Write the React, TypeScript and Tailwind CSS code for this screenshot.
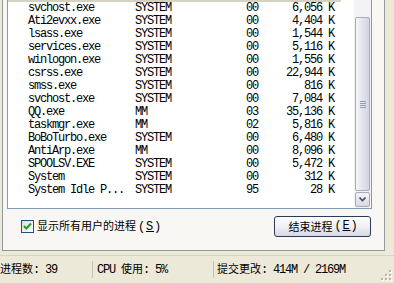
import React from 'react';

const ROWS: [string, string, string, string][] = [
  ['svchost.exe', 'SYSTEM', '00', '6,056 K'],
  ['Ati2evxx.exe', 'SYSTEM', '00', '4,404 K'],
  ['lsass.exe', 'SYSTEM', '00', '1,544 K'],
  ['services.exe', 'SYSTEM', '00', '5,116 K'],
  ['winlogon.exe', 'SYSTEM', '00', '1,556 K'],
  ['csrss.exe', 'SYSTEM', '00', '22,944 K'],
  ['smss.exe', 'SYSTEM', '00', '816 K'],
  ['svchost.exe', 'SYSTEM', '00', '7,084 K'],
  ['QQ.exe', 'MM', '03', '35,136 K'],
  ['taskmgr.exe', 'MM', '02', '5,816 K'],
  ['BoBoTurbo.exe', 'SYSTEM', '00', '6,480 K'],
  ['AntiArp.exe', 'MM', '00', '8,096 K'],
  ['SPOOLSV.EXE', 'SYSTEM', '00', '5,472 K'],
  ['System', 'SYSTEM', '00', '312 K'],
  ['System Idle P...', 'SYSTEM', '95', '28 K'],
];

// ascii in a narrow mono (6px cells), cjk in its own span
const mono = "font-['Liberation_Mono',monospace] text-[12px] tracking-[-1.2px]";
const cjk = "font-['Noto_Sans_CJK_SC',sans-serif] text-[11px] tracking-normal";

const Cjk: React.FC<{ children: React.ReactNode }> = ({ children }) => (
  <span className={cjk}>{children}</span>
);

// "(S)" style accelerator, a little wider than plain ascii
const Key: React.FC<{ k: string }> = ({ k }) => (
  <span className="tracking-[0.8px] ml-[2px]">
    (<span className="underline">{k}</span>)
  </span>
);

export default function App() {
  return (
    <div className={`w-[394px] h-[283px] overflow-hidden bg-[#ece9d8] flex flex-col text-black ${mono}`}>
      {/* tab page */}
      <div className="flex">
        <div className="w-[2px] bg-[#ece9d8]" />
        <div className="w-[383px] h-[251px] bg-[#f8f7f3] border-l border-r border-b border-[#919b9c] flex flex-col pl-[4px] pr-[12px]">
          {/* list view */}
          <div className="h-[209px] border-l border-r border-b border-[#7f9db9] bg-white flex">
            <div className="flex-1 flex flex-col">
              <div className="h-[2px] w-[333px] bg-[#d6d2c2]" />
              {ROWS.map((r, i) => (
                <div key={i} className="h-[13px] leading-[13px] grid grid-cols-[20px_107px_111px_40px_49px] whitespace-pre">
                  <span />
                  <span>{r[0]}</span>
                  <span>{r[1]}</span>
                  <span>{r[2]}</span>
                  <span className="text-right pr-[1px]">{r[3]}</span>
                </div>
              ))}
            </div>
            {/* scrollbar */}
            <div className="w-[17px] bg-[#f3f3f6] flex flex-col">
              <div className="h-[17px]" />
              <div className="flex-1 mx-[1px] rounded-[2px] border border-[#a8a9c0] bg-gradient-to-r from-[#f6f6fa] via-[#e3e3ec] to-[#d4d4e0] flex items-center justify-center">
                <div className="flex flex-col gap-[1px]">
                  <div className="w-[6px] h-[1px] bg-[#9a9ab0]" />
                  <div className="w-[6px] h-[1px] bg-[#9a9ab0]" />
                  <div className="w-[6px] h-[1px] bg-[#9a9ab0]" />
                  <div className="w-[6px] h-[1px] bg-[#9a9ab0]" />
                </div>
              </div>
              <div className="h-[15px] m-[1px] rounded-[2px] border border-[#a8a9c0] bg-gradient-to-b from-[#f4f4f8] to-[#d8d8e4] flex items-center justify-center">
                <svg width="7" height="5" viewBox="0 0 7 5">
                  <path d="M0.5 0.5 L3.5 3.5 L6.5 0.5" fill="none" stroke="#4d4d60" strokeWidth="1.6" />
                </svg>
              </div>
            </div>
          </div>

          {/* controls */}
          <div className="mt-[7px] h-[21px] flex items-center">
            <div className="ml-[14px] w-[13px] h-[13px] border border-[#1c5180] bg-gradient-to-br from-[#dcdcd7] to-white flex items-center justify-center">
              <svg width="9" height="9" viewBox="0 0 9 9">
                <path d="M1 4 L3.3 6.5 L8 1.5" fill="none" stroke="#21a121" strokeWidth="2" />
              </svg>
            </div>
            <div className="ml-[3px] leading-[13px] whitespace-pre">
              <Cjk>显示所有用户的进程</Cjk>
              <Key k="S" />
            </div>
            <div className="ml-auto mr-[1px] w-[97px] h-[21px] rounded-[3px] border border-[#2c3b5a] bg-gradient-to-b from-white via-[#f0f0f5] to-[#d8d8e6] flex items-center justify-center leading-[13px] whitespace-pre pl-[2px]">
              <Cjk>结束进程</Cjk>
              <Key k="E" />
            </div>
          </div>
        </div>
      </div>

      {/* status bar */}
      <div className="mt-[4px] flex-1 border-t border-[#d8d4c6] flex items-center relative">
        <div className="w-[92px] leading-[13px] whitespace-pre">
          <Cjk>进程数</Cjk>: 39
        </div>
        <div className="w-[1px] h-[17px] bg-[#c5c2b2]" />
        <div className="w-[120px] pl-[4px] leading-[13px] whitespace-pre">
          CPU <Cjk>使用</Cjk>: 5%
        </div>
        <div className="w-[1px] h-[17px] bg-[#c5c2b2]" />
        <div className="pl-[3px] leading-[13px] whitespace-pre">
          <Cjk>提交更改</Cjk>: 414M / 2169M
        </div>
        <svg className="absolute right-[2px] bottom-[2px]" width="11" height="11" viewBox="0 0 11 11">
          {[[8, 0], [4, 4], [8, 4], [0, 8], [4, 8], [8, 8]].map(([x, y], i) => (
            <g key={i}>
              <rect x={x + 1} y={y + 1} width="2" height="2" fill="#ffffff" />
              <rect x={x} y={y} width="2" height="2" fill="#b9b6a7" />
            </g>
          ))}
        </svg>
      </div>
    </div>
  );
}
